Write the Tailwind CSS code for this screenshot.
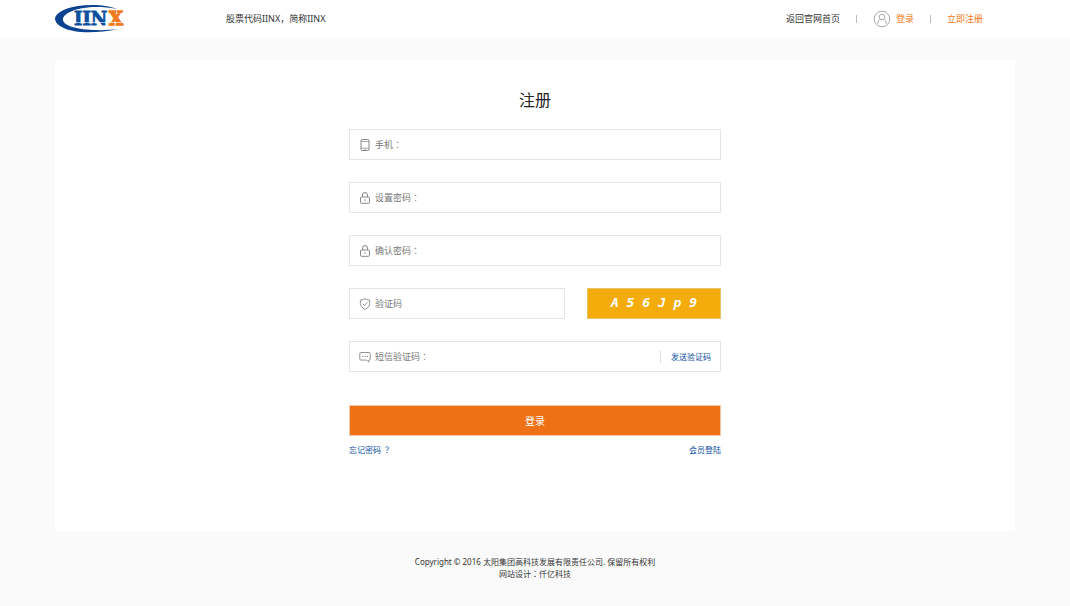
<!DOCTYPE html>
<html lang="zh-CN">
  <head>
    <meta charset="UTF-8" />
    <meta name="viewport" content="width=device-width, initial-scale=1.0" />
    <title>注册</title>
    <script src="https://cdn.jsdelivr.net/npm/@tailwindcss/browser@4"></script>
  </head>
  <body class="min-h-screen bg-[#fafafa] font-['Noto_Sans','Noto_Sans_CJK_SC',sans-serif] text-[9px] leading-4 text-[#333]">
    <!-- Header -->
    <header class="bg-white">
      <div class="mx-auto flex h-[38px] max-w-[960px] items-center">
        <a href="#" aria-label="IINX" class="mr-[98px]">
          <svg class="block h-[30px] w-[73px]" viewBox="0 0 73 30">
            <path d="M62 5 C52 1 36 0 23 2 C8 4 0 10 0 15 C1 25 24 33 64 25 C40 28 9 25 8 16 C7 8 30 -1 62 5Z" fill="#0b4390" />
            <text x="19" y="21" font-family="DejaVu Serif" font-weight="bold" font-size="18" fill="#0b4f9f" stroke="#0b4f9f" stroke-width=".8">IIN</text>
            <text x="54" y="21" font-family="DejaVu Serif" font-weight="bold" font-size="18" fill="#f47a20" stroke="#f47a20" stroke-width="1.4">X</text>
            <path d="M16 18.5H73" stroke="#fff" stroke-width=".6" />
          </svg>
        </a>
        <p>股票代码IINX，简称IINX</p>
        <nav class="mr-8 ml-auto flex items-center">
          <a href="#">返回官网首页</a>
          <span class="mx-4 h-2 w-px bg-[#bbb]"></span>
          <a href="#" class="flex items-center gap-[5px] text-[#f47a20]">
            <svg class="size-[18px]" viewBox="0 0 18 18" fill="none" stroke="#aaa">
              <circle cx="9" cy="9" r="7.8" />
              <circle cx="9" cy="7" r="2.8" />
              <path d="M4.8 13.8C4.8 11.2 6 9.8 7.6 9.3M13.2 13.8C13.2 11.2 12 9.8 10.4 9.3" />
            </svg>
            登录
          </a>
          <span class="mx-4 h-2 w-px bg-[#bbb]"></span>
          <a href="#" class="text-[#f47a20]">立即注册</a>
        </nav>
      </div>
    </header>

    <!-- Register card -->
    <main class="mx-auto mt-[22px] max-w-[960px] bg-white pt-7 pb-[73px]">
      <h1 class="text-center text-base leading-6 text-[#222]">注册</h1>

      <form class="mx-auto mt-[17px] flex max-w-[372px] flex-col gap-[22px] text-[#777]">
        <div class="flex h-[31px] items-center border border-[#e5e5e5] px-[9px]">
          <label for="phone" class="flex items-center gap-1">
            <svg class="size-3" viewBox="0 0 12 12" fill="none" stroke="#888">
              <rect x="2" y=".5" width="8" height="11" rx="1.2" />
              <path d="M2 2.5h8M2 9.2h8" stroke-width=".7" />
              <path d="M5.3 10.4h1.4" stroke-width=".8" />
            </svg>
            <span>手机<span lang="zh-TW" class="font-['Noto_Sans_CJK_TC',sans-serif]">：</span></span>
          </label>
          <input id="phone" type="tel" class="min-w-0 flex-1 outline-none" />
        </div>

        <div class="flex h-[31px] items-center border border-[#e5e5e5] px-[9px]">
          <label for="password" class="flex items-center gap-1">
            <svg class="size-3" viewBox="0 0 12 12" fill="none" stroke="#888">
              <rect x="1.5" y="5" width="9" height="6.3" rx="1" />
              <path d="M3.5 5V3a2.5 2.5 0 0 1 5 0V5M6 7.2v1.8" />
            </svg>
            <span>设置密码<span lang="zh-TW" class="font-['Noto_Sans_CJK_TC',sans-serif]">：</span></span>
          </label>
          <input id="password" type="password" class="min-w-0 flex-1 outline-none" />
        </div>

        <div class="flex h-[31px] items-center border border-[#e5e5e5] px-[9px]">
          <label for="confirm" class="flex items-center gap-1">
            <svg class="size-3" viewBox="0 0 12 12" fill="none" stroke="#888">
              <rect x="1.5" y="5" width="9" height="6.3" rx="1" />
              <path d="M3.5 5V3a2.5 2.5 0 0 1 5 0V5M6 7.2v1.8" />
            </svg>
            <span>确认密码<span lang="zh-TW" class="font-['Noto_Sans_CJK_TC',sans-serif]">：</span></span>
          </label>
          <input id="confirm" type="password" class="min-w-0 flex-1 outline-none" />
        </div>

        <div class="flex gap-[22px]">
          <div class="flex h-[31px] flex-1 items-center border border-[#e5e5e5] px-[9px]">
            <label for="captcha" class="flex items-center gap-1">
              <svg class="size-3" viewBox="0 0 12 12" fill="none" stroke="#888" stroke-width=".9">
                <path d="M6 .7C4.8 1.6 3.2 2 1.4 2v3.5c0 2.8 1.8 4.6 4.6 5.8 2.8-1.2 4.6-3 4.6-5.8V2C8.8 2 7.2 1.6 6 .7Z" />
                <path d="M3.8 5.8l1.7 1.7 2.9-3" />
              </svg>
              验证码
            </label>
            <input id="captcha" type="text" class="min-w-0 flex-1 outline-none" />
          </div>
          <button type="button" class="h-[31px] w-[134px] border border-[#e9c36a] bg-[#f3ac0c] pb-[2px] font-['DejaVu_Sans_Mono',monospace] text-[13px] font-bold text-white italic">A 5 6 J p 9</button>
        </div>

        <div class="flex h-[31px] items-center border border-[#e5e5e5] px-[9px]">
          <label for="sms" class="flex items-center gap-1">
            <svg class="size-3" viewBox="0 0 12 12" fill="none" stroke="#888" stroke-width=".9">
              <path d="M1.8 1.5h8.4q1 0 1 1v5.6q0 1-1 1H9.8v2L7.6 9.1H1.8q-1 0-1-1V2.5q0-1 1-1Z" />
              <path d="M3 5.5h1.2M5.4 5.5h1.2M7.8 5.5H9" stroke-width="1.1" />
            </svg>
            <span>短信验证码<span lang="zh-TW" class="font-['Noto_Sans_CJK_TC',sans-serif]">：</span></span>
          </label>
          <input id="sms" type="text" class="min-w-0 flex-1 outline-none" />
          <button type="button" class="border-l border-[#ddd] pl-[10px] text-[8px] leading-3 text-[#0b4f9f]">发送验证码</button>
        </div>

        <div class="mt-[11px]">
          <button type="submit" class="h-[31px] w-full border border-[#f3c9a5] bg-[#ee7215] text-[10px] text-white">登录</button>
          <div class="mt-[6px] flex justify-between text-[8px] text-[#0b4f9f]">
            <a href="#">忘记密码 <span lang="zh-TW" class="font-['Noto_Sans_CJK_TC',sans-serif]">？</span></a>
            <a href="#">会员登陆</a>
          </div>
        </div>
      </form>
    </main>

    <!-- Footer -->
    <footer class="mt-[25px] text-center text-[8px] leading-3">
      <p>Copyright © 2016 太阳集团高科技发展有限责任公司. 保留所有权利</p>
      <p>网站设计<span lang="zh-TW" class="font-['Noto_Sans_CJK_TC',sans-serif]">：</span>仟亿科技</p>
    </footer>
  </body>
</html>
